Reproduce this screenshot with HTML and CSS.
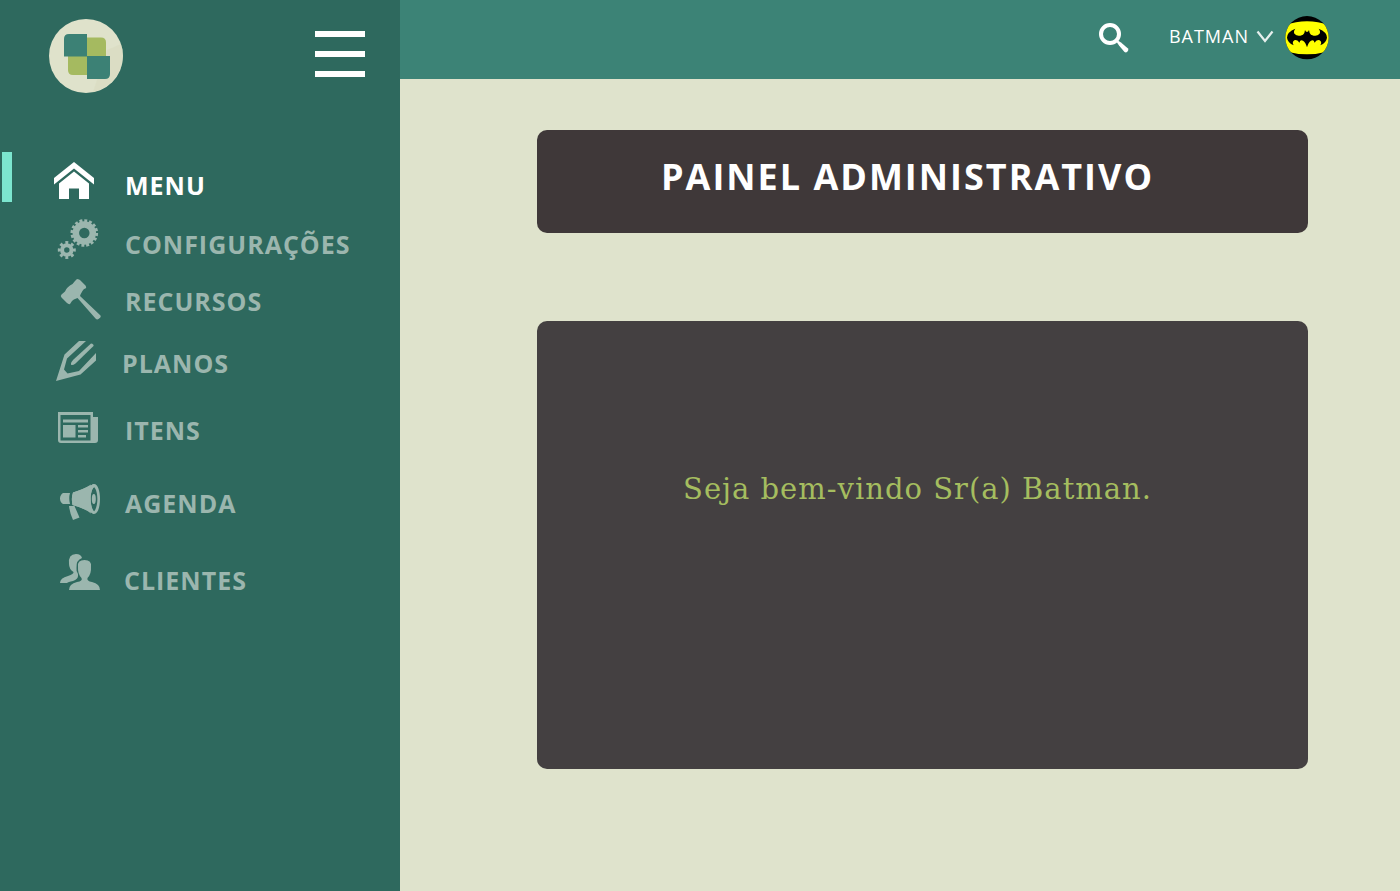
FILE: index.html
```html
<!DOCTYPE html>
<html lang="pt-BR">
<head>
<meta charset="utf-8">
<meta name="viewport" content="width=device-width, initial-scale=1">
<title>Painel Administrativo</title>
<link rel="stylesheet" href="styles.css">
</head>
<body>
<div class="app">
  <aside class="sidebar">
    <div class="sidebar-head">
      <a class="logo" href="#" aria-label="Início">
        <svg viewBox="0 0 74 74" width="74" height="74">
          <circle cx="37" cy="37" r="37" fill="#dfe2cb"/>
          <path d="M58 31 72 25A37 37 0 0 1 44 73Z" fill="#d8dbc0" opacity=".6"/>
          <path d="M38 18.500H52Q57 18.500 57 23.500V38H38Z" fill="#a5ba60"/>
          <path d="M19 37H38V56H24Q19 56 19 51Z" fill="#a5ba60"/>
          <path d="M20 15H38V37.500H15V20Q15 15 20 15Z" fill="#3c8175"/>
          <path d="M38 37H61V55Q61 60 56 60H38Z" fill="#3c8175"/>
        </svg>
      </a>
      <button class="burger" type="button" aria-label="Alternar menu"><span></span><span></span><span></span></button>
    </div>
    <nav class="nav">
      <a class="nav-item active" href="#">
        <svg viewBox="52 157 52 56" class="nav-icon"><path d="M74 162 94 178V184.500L74 168.500 54 184.500V178Z"/><path d="M74 171.500 89 183.500V199H79V188.500H69V199H59V183.500Z"/></svg>
        <span>MENU</span></a>
      <a class="nav-item" href="#">
        <svg viewBox="52 216 52 56" class="nav-icon"><g fill="none" stroke="currentColor"><circle cx="84.300" cy="233" r="8.500" stroke-width="6.500"/><circle cx="84.300" cy="233" r="12.300" stroke-width="3" pathLength="32" stroke-dasharray="1.200 .8"/><circle cx="66.800" cy="250" r="4.700" stroke-width="4"/><circle cx="66.800" cy="250" r="7.500" stroke-width="3" pathLength="16" stroke-dasharray="1 1" stroke-dashoffset=".5"/></g></svg>
        <span>CONFIGURAÇÕES</span></a>
      <a class="nav-item recursos" href="#">
        <svg viewBox="52 273 52 56" class="nav-icon"><path d="M77 279Q79.500 279 80.500 280.500L85.500 285.500Q87 287.500 85.500 288.500L84 289Q82 291 80.500 294.500L80 296 100.500 315.500Q101.500 317 98.500 319Q97 320 95.500 318.500L77.500 298Q73 299.500 72 301L70 304Q68.500 304.500 67 303L61.500 297.500Q60 296 61.500 294.500L65 291.500Q67 286.500 72.500 284L75 281Z"/></svg>
        <span>RECURSOS</span></a>
      <a class="nav-item planos" href="#">
        <svg viewBox="52 335 52 56" class="nav-icon"><path fill-rule="evenodd" d="M79 341H86L67 358.500 64 369.500 67.500 373.500 79 371 96 353V360.500L80.500 374.500 56 381 64.500 354.500Z"/><path d="M61 368 67.500 374 60 378.500Z"/><path d="M91 343.500Q94 344 93.500 346L75.500 363.500Q72 366 71 364.500Q70.500 362.500 73.500 359.500Z"/></svg>
        <span>PLANOS</span></a>
      <a class="nav-item itens" href="#">
        <svg viewBox="52 402 52 56" class="nav-icon"><path fill-rule="evenodd" d="M58 412H93V417H98V440Q98 443 95 443H61Q58 443 58 440ZM60.500 415V440.500H90.500V415Z"/><path d="M63 419.500H88V422.500H63ZM63 425H75.500V437.500H63ZM78 425H88V427.500H78ZM78 430H88V432.500H78ZM78 435H86V437.500H78Z"/></svg>
        <span>ITENS</span></a>
      <a class="nav-item agenda" href="#">
        <svg viewBox="52 475 52 56" class="nav-icon"><path d="M63 493H70Q68.500 498 70 504H63Q60 502 60 498.500Q60 495 63 493ZM69 506H74.500L79.500 517.500 73 520Q70 514 69 506ZM73 492.500Q84 489 91 484.500Q87 499 91 513.500Q84 508 72.500 505Q71 498 73 492.500Z"/><path fill-rule="evenodd" d="M94 484C102 484 102 514 94 514C86 514 86 484 94 484ZM94 487C89.500 491 89.500 507 94 511.500C98.500 507 98.500 491 94 487Z"/><path d="M73 492.500Q84 489 94 484V487C89.500 491 89.500 507 94 511.500V514Q84 508 72.500 505Q71 498 73 492.500Z"/><ellipse cx="93.800" cy="499" rx="2" ry="5"/></svg>
        <span>AGENDA</span></a>
      <a class="nav-item clientes" href="#">
        <svg viewBox="52 552 52 56" class="nav-icon"><path d="M69 564Q68 554 76 554Q81 554 82 558Q76 560 76.500 568Q76 571 78 574V576Q78 579 73 581Q68 582 67 583H60Q60 578 68 576Q74 574 73.500 572Q69 569 69 564Z"/><path d="M78 567Q77 560 84.500 560Q92 560 91 567Q91.500 574 87.500 578Q86.500 581 92 582Q100 584 100 590H69Q69 584 77 582Q83 581 81.500 578Q77.500 574 78 567Z"/></svg>
        <span>CLIENTES</span></a>
    </nav>
  </aside>
  <div class="content">
    <header class="topbar">
      <button class="search" type="button" aria-label="Pesquisar">
        <svg viewBox="0 0 30 30" width="30" height="30"><circle cx="11" cy="11" r="9" fill="none" stroke="#fff" stroke-width="4"/><path d="M18 17 22 19.500 29 25.500Q30 27 28.500 28.500T25.500 29L20 22.500 17 18Z" fill="#fff"/></svg>
      </button>
      <button class="user" type="button">
        <span>BATMAN</span>
        <svg viewBox="0 0 18 14" width="18" height="14"><path d="M1.500 2.500 9 12 16.500 2.500" fill="none" stroke="#e6efed" stroke-width="2.200"/></svg>
      </button>
      <a class="avatar" href="#" aria-label="Perfil">
        <svg viewBox="0 0 132 132" width="44" height="44">
          <defs><clipPath id="disc"><circle cx="66" cy="65" r="65"/></clipPath></defs>
          <g clip-path="url(#disc)"><path d="M0 0H132V132H0Z"/><path d="M0 28Q66 4 132 28V106Q66 124 0 106Z" fill="#ff0"/></g>
          <path d="M31 38Q6 48 6 65Q8 80 26 88Q20 78 28 73Q38 70 43 80Q46 70 54 74Q62 79 66 94Q70 79 78 74Q86 70 89 80Q94 70 104 73Q112 78 106 88Q124 80 126 65Q126 48 101 38Q108 47 103 54Q97 61 86 59Q76 57 74 51L72 42 69 47H63L60 42 58 51Q56 57 46 59Q35 61 29 54Q24 47 31 38Z"/>
        </svg>
      </a>
    </header>
    <main class="main">
      <section class="panel title-panel"><h1>PAINEL ADMINISTRATIVO</h1></section>
      <section class="panel welcome-panel"><p>Seja bem-vindo Sr(a) Batman.</p></section>
    </main>
  </div>
</div>
</body>
</html>
```
FILE: styles.css
```css
* { box-sizing: border-box; }
body { margin: 0; font-family: "Open Sans", "Noto Sans", sans-serif; }
button { padding: 0; border: 0; background: none; color: inherit; font: inherit; cursor: pointer; }
a { color: inherit; text-decoration: none; }
svg { display: block; }
h1, p { margin: 0; }

.app { display: flex; min-height: 100vh; background: #dfe3cc; }

.sidebar { flex: 0 0 400px; background: #2e695e; color: #9bb6ae; }
.sidebar-head { display: flex; justify-content: space-between; align-items: center; padding: 19px 35px 0 49px; }
.burger { display: flex; flex-direction: column; gap: 14px; width: 50px; padding-bottom: 4px; }
.burger span { height: 6px; background: #fff; }

.nav { padding-top: 62px; }
.nav-item {
  position: relative;
  display: flex;
  align-items: center;
  gap: 21px;
  height: 58px;
  padding-left: 52px;
  font-size: 25px;
  line-height: 34px;
  font-weight: 700;
  letter-spacing: 1px;
}
.nav-item.active { height: 60px; color: #fff; }
.nav-item.active::before {
  content: "";
  position: absolute;
  left: 2px;
  top: -3px;
  width: 10px;
  height: 50px;
  background: #7ce6cf;
}
.nav-item.recursos { height: 56px; }
.nav-item.planos { gap: 18px; height: 68px; }
.nav-item.itens { height: 66px; }
.nav-item.agenda { height: 80px; }
.nav-item.clientes { gap: 20px; height: 74px; }
.nav-icon { flex: none; width: 52px; height: 56px; fill: currentColor; }

.content { flex: 1; min-width: 0; }
.topbar {
  display: flex;
  justify-content: flex-end;
  align-items: center;
  height: 79px;
  padding: 0 71px 3px 20px;
  background: #3c8376;
  color: #fff;
}
.user { display: flex; align-items: center; gap: 7px; margin: 0 11px 0 40px; padding-bottom: 5px; font-size: 18px; line-height: 24px; letter-spacing: 1px; }

.main { display: flex; flex-direction: column; gap: 88px; padding: 51px 92px 40px 137px; }
.panel { border-radius: 10px; text-align: center; }
.title-panel { padding: 22px 30px 31px 0; background: #3f3839; color: #fff; }
.title-panel h1 { font-size: 36px; line-height: 50px; font-weight: 700; letter-spacing: 2px; }
.welcome-panel { min-height: 448px; padding: 148px 10px 40px 0; background: #444041; color: #a5bd5f; }
.welcome-panel p { font-family: "Roboto Slab", "DejaVu Serif", serif; font-size: 29px; line-height: 40px; letter-spacing: 1px; }
```
